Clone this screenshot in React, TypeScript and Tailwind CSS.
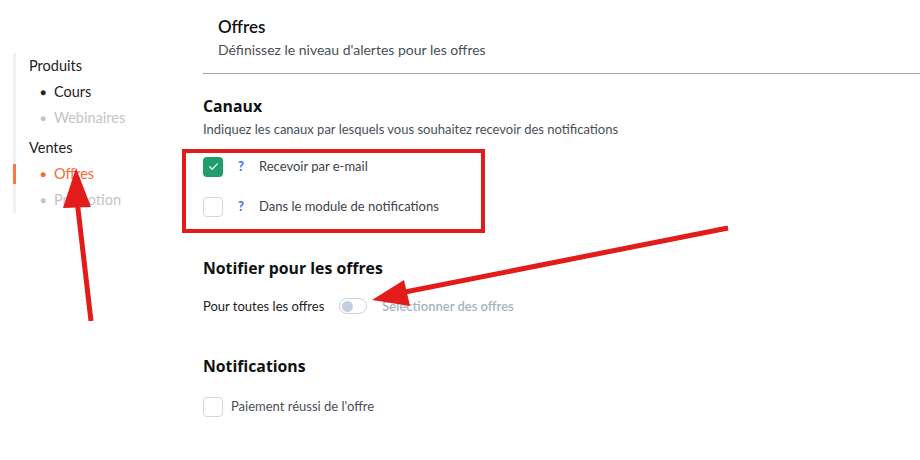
import React from "react";

function Check({ checked }: { checked?: boolean }) {
    return checked ? (
        <span className="flex h-5 w-5 items-center justify-center rounded bg-[#1d9e6c]">
            <svg width="13" height="13" viewBox="0 0 12 12" fill="none">
                <path d="M2.5 6.3l2.3 2.3 4.7-5" stroke="white" strokeWidth="1.2" strokeLinecap="round" strokeLinejoin="round" />
            </svg>
        </span>
    ) : (
        <span className="block h-5 w-5 rounded border border-[#d4d6da] bg-white" />
    );
}

export default function App() {
    return (
        <div className="relative h-[460px] w-[920px] overflow-hidden bg-white font-['Lato',sans-serif] text-[#222]">
            <div className="flex">
                {/* Sidebar */}
                <aside className="w-[203px] shrink-0 pl-[13px] pt-[55px]">
                    <div className="relative border-l-[3px] border-[#f1f1f1] pl-[13px] text-[14.5px] leading-[26px]">
                        <div className="-mt-[2px]">Produits</div>
                        <div className="flex items-center gap-[8px] pl-[11px]"><span className="text-[10px]">●</span><span>Cours</span></div>
                        <div className="flex items-center gap-[8px] pl-[11px] text-[#c4c4c4]"><span className="text-[10px]">●</span><span>Webinaires</span></div>
                        <div className="mt-[4px]">Ventes</div>
                        <div className="relative flex items-center gap-[8px] pl-[11px] text-[#f26b32]">
                            <span className="absolute -left-[16px] top-[3px] h-[20px] w-[3px] bg-[#f47a3e]" />
                            <span className="text-[10px]">●</span><span>Offres</span>
                        </div>
                        <div className="-mb-[8px] flex items-center gap-[8px] pl-[11px] text-[#c4c4c4]"><span className="text-[10px]">●</span><span>Promotion</span></div>
                    </div>
                </aside>

                {/* Main */}
                <main className="flex-1">
                    <div className="pl-[15px] pt-[16px] pb-[13px]">
                        <h1 className="text-[17px] font-semibold leading-[22px] text-[#111]">Offres</h1>
                        <p className="mt-[1px] text-[14px] text-[#4a4f57]">Définissez le niveau d'alertes pour les offres</p>
                    </div>
                    <div className="h-px bg-[#9aa3b1]" />

                    <section className="pt-[21px]">
                        <h2 className="font-['Open_Sans',sans-serif] text-[15.8px] font-bold leading-[22px] text-[#111]">Canaux</h2>
                        <p className="mt-[3px] text-[13px] text-[#4a4f57]">Indiquez les canaux par lesquels vous souhaitez recevoir des notifications</p>
                        <div className="mt-[17px] flex flex-col gap-[20px] text-[13px] text-[#3d424a]">
                            <div className="flex items-center">
                                <Check checked />
                                <span className="ml-[15px] w-[21px] font-bold text-[#3b6cf0]">?</span>
                                <span>Recevoir par e-mail</span>
                            </div>
                            <div className="flex items-center">
                                <Check />
                                <span className="ml-[15px] w-[21px] font-bold text-[#3b6cf0]">?</span>
                                <span>Dans le module de notifications</span>
                            </div>
                        </div>
                    </section>

                    <section className="pt-[40px]">
                        <h2 className="font-['Open_Sans',sans-serif] text-[15.8px] font-bold leading-[22px] text-[#111]">Notifier pour les offres</h2>
                        <div className="mt-[18px] flex items-center text-[13px]">
                            <span className="text-[#222]">Pour toutes les offres</span>
                            <span className="ml-[15px] flex h-[16px] w-[28px] items-center rounded-full border border-[#c9d3e3] bg-white px-[2px]">
                                <span className="h-[11px] w-[11px] rounded-full bg-[#c3cfe0]" />
                            </span>
                            <span className="ml-[15px] font-semibold text-[#a7b1c2]">Sélectionner des offres</span>
                        </div>
                    </section>

                    <section className="pt-[39px]">
                        <h2 className="font-['Open_Sans',sans-serif] text-[15.8px] font-bold leading-[22px] text-[#111]">Notifications</h2>
                        <div className="mt-[20px] flex items-center text-[13px] text-[#4a4f57]">
                            <Check />
                            <span className="ml-[8px]">Paiement réussi de l'offre</span>
                        </div>
                    </section>
                </main>
            </div>

            {/* Annotations */}
            <div className="pointer-events-none absolute left-[182px] top-[149px] h-[84px] w-[303px] border-[4px] border-[#e21b1b]" />
            <svg className="pointer-events-none absolute left-0 top-0" width="920" height="460">
                <line x1="91" y1="321" x2="77" y2="200" stroke="#e21b1b" strokeWidth="5" />
                <polygon points="76,168 91,207 63,208" fill="#e21b1b" />
                <line x1="728" y1="228" x2="400" y2="293" stroke="#e21b1b" strokeWidth="5" />
                <polygon points="372,300 404,280 410,306" fill="#e21b1b" />
            </svg>
        </div>
    );
}
